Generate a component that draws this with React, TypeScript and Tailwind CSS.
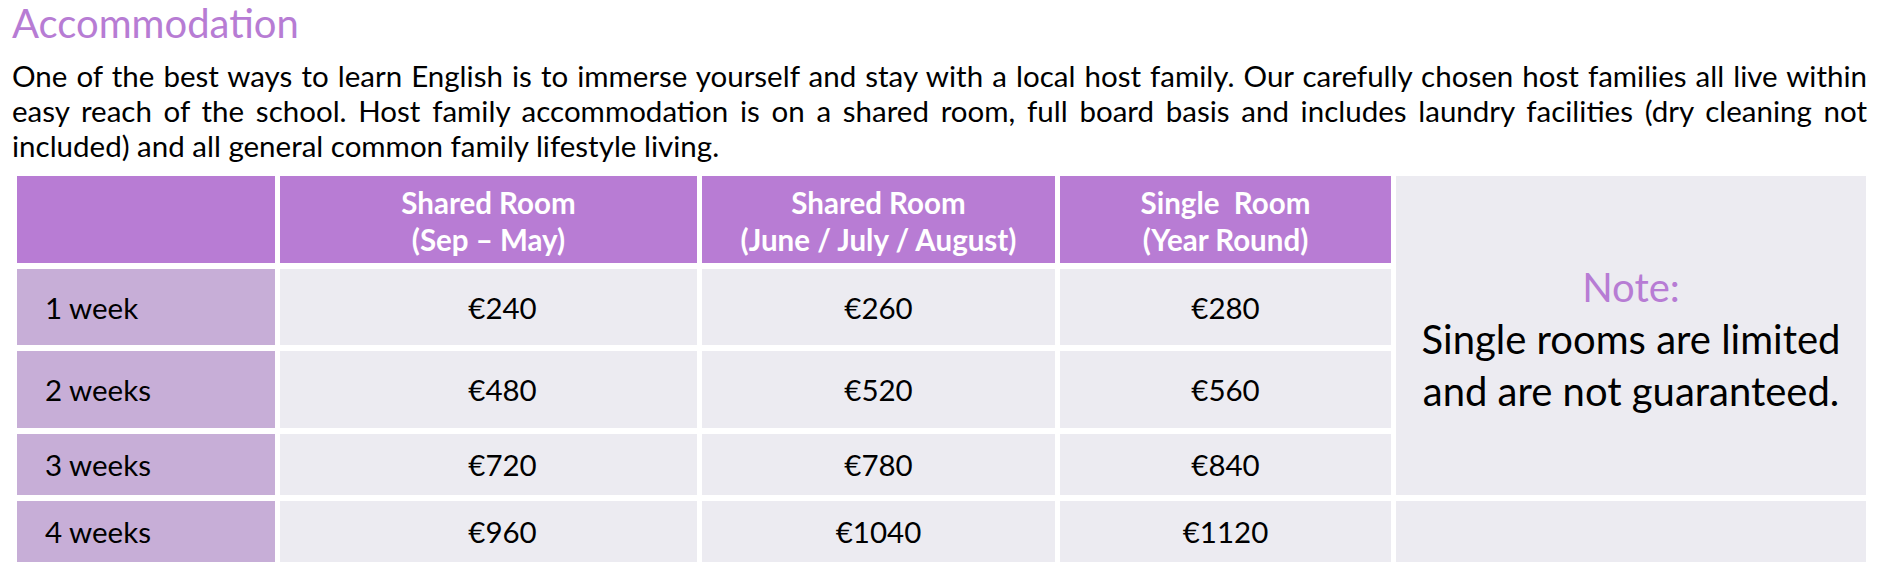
import React from "react";

const rows = [
  { label: "1 week", v: ["€240", "€260", "€280"] },
  { label: "2 weeks", v: ["€480", "€520", "€560"] },
  { label: "3 weeks", v: ["€720", "€780", "€840"] },
  { label: "4 weeks", v: ["€960", "€1040", "€1120"] },
];

export default function App() {
  return (
    <div className="w-[1890px] h-[566px] bg-white overflow-hidden font-['Lato',sans-serif] text-black">
      <h1 className="pl-[12px] text-[40px] leading-[46px] text-[#b77cd4] font-normal">
        Accommodation
      </h1>
      <div className="ml-[12px] w-[1855px] mt-[12px] text-[29.5px] leading-[35px]">
        <div className="text-justify [text-align-last:justify] whitespace-nowrap">
          One of the best ways to learn English is to immerse yourself and stay with a local host family. Our carefully chosen host families all live within
        </div>
        <div className="text-justify [text-align-last:justify] whitespace-nowrap">
          easy reach of the school. Host family accommodation is on a shared room, full board basis and includes laundry facilities (dry cleaning not
        </div>
        <div>included) and all general common family lifestyle living.</div>
      </div>
      <div className="ml-[17px] mt-[13px] grid grid-cols-[258px_417px_353px_331px_470px] grid-rows-[87px_76px_77px_61px_61px] gap-x-[5px] gap-y-[6px] w-[1849px]">
        <div className="bg-[#b87cd4]" />
        {[
          ["Shared Room", "(Sep – May)"],
          ["Shared Room", "(June / July / August)"],
          ["Single\u00a0 Room", "(Year Round)"],
        ].map(([a, b], i) => (
          <div
            key={i}
            className="bg-[#b87cd4] flex flex-col items-center justify-center pt-[2px] text-white font-bold text-[29.5px] leading-[37px]"
          >
            <div>{a}</div>
            <div>{b}</div>
          </div>
        ))}
        <div className="row-span-4 bg-[#ecebf1] flex flex-col items-center justify-center pt-[6px] text-center text-[40px] leading-[52px]">
          <div className="text-[#b77cd4]">Note:</div>
          <div>Single rooms are limited</div>
          <div>and are not guaranteed.</div>
        </div>
        {rows.map((r, ri) => (
          <React.Fragment key={ri}>
            <div className="bg-[#c7aed7] flex items-center pl-[28px] pt-[2px] text-[29.5px]">
              {r.label}
            </div>
            {r.v.map((v, vi) => (
              <div
                key={vi}
                className={
                  vi === 0
                    ? "bg-[#ecebf1] flex items-center justify-center pl-[28px] pt-[2px] text-[29.5px]"
                    : "bg-[#ecebf1] flex items-center justify-center pt-[2px] text-[29.5px]"
                }
              >
                {v}
              </div>
            ))}
            {ri === 3 ? <div className="bg-[#ecebf1]" /> : null}
          </React.Fragment>
        ))}
      </div>
    </div>
  );
}
